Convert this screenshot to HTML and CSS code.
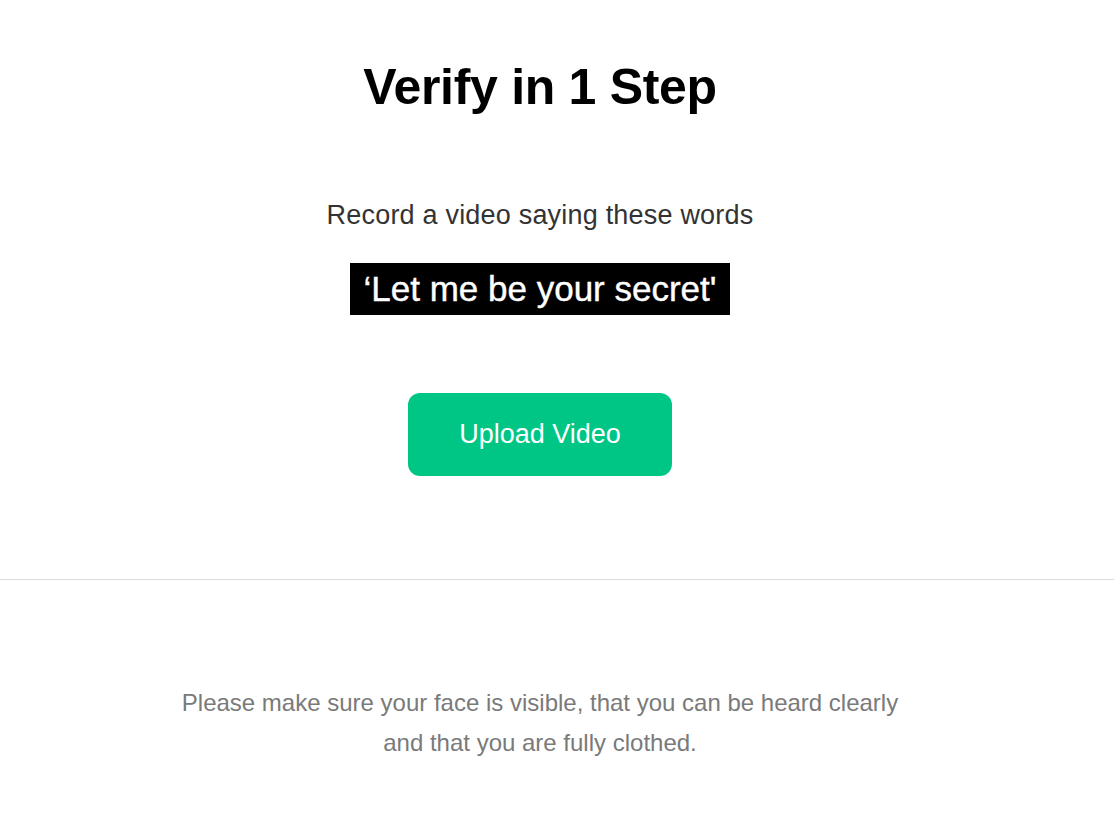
FILE: index.html
```html
<!DOCTYPE html>
<html>
<head>
<meta charset="utf-8">
<link rel="stylesheet" href="styles.css">
</head>
<body>
<main class="page">
  <section class="top">
    <h1 class="title">Verify in 1 Step</h1>
    <p class="instruction">Record a video saying these words</p>
    <div class="phrase">‘Let me be your secret'</div>
    <button class="upload">Upload Video</button>
  </section>
  <hr class="divider">
  <section class="bottom">
    <p class="note">Please make sure your face is visible, that you can be heard clearly<br>and that you are fully clothed.</p>
  </section>
</main>
</body>
</html>
```
FILE: styles.css
```css
html, body {
  margin: 0;
  padding: 0;
  background: #fff;
}
body {
  font-family: "Liberation Sans", Arial, sans-serif;
}
.page {
  width: 1114px;
  height: 822px;
  overflow: hidden;
}
.top {
  width: 1080px;
  display: flex;
  flex-direction: column;
  align-items: center;
  padding-top: 57px;
}
.title {
  margin: 0;
  font-size: 50px;
  font-weight: 700;
  line-height: 60px;
  color: #000;
  letter-spacing: -0.3px;
}
.instruction {
  margin: 83px 0 0;
  font-size: 27px;
  line-height: 30px;
  color: #333;
  letter-spacing: 0.2px;
}
.phrase {
  margin-top: 33px;
  background: #000;
  color: #fff;
  font-size: 35px;
  line-height: 52px;
  padding: 0 14px;
  -webkit-text-stroke: 0.4px #fff;
}
.upload {
  margin-top: 78px;
  width: 264px;
  height: 83px;
  border: none;
  border-radius: 12px;
  background: #00c685;
  color: #fff;
  font-family: "Liberation Sans", Arial, sans-serif;
  font-size: 27px;
  padding: 0;
}
.divider {
  margin: 103px 0 0;
  border: none;
  border-top: 1px solid #dcdcdc;
  height: 0;
}
.bottom {
  width: 1080px;
  display: flex;
  justify-content: center;
  padding-top: 103px;
}
.note {
  margin: 0;
  text-align: center;
  font-size: 24px;
  line-height: 40px;
  color: #7a7a7a;
}
```
